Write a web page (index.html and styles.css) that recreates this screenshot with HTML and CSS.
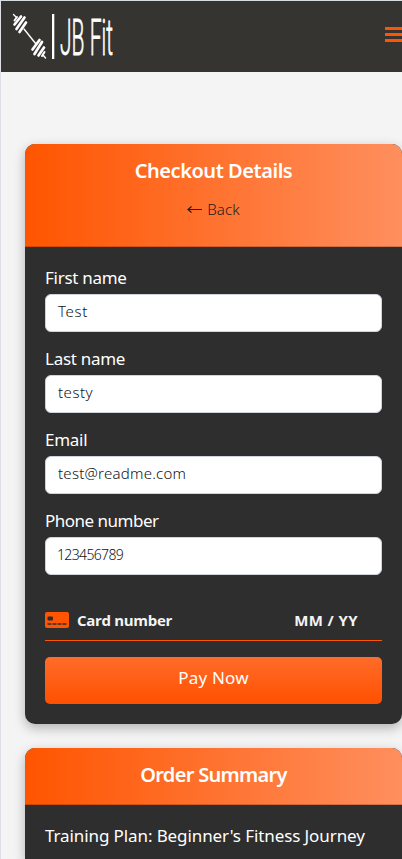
FILE: index.html
```html
<!DOCTYPE html>
<html lang="en">
<head>
<meta charset="utf-8">
<meta name="viewport" content="width=device-width">
<title>JB Fit - Checkout</title>
<link rel="stylesheet" href="styles.css">
</head>
<body>
<header class="navbar">
  <svg class="logo" width="220" height="70" viewBox="0 0 220 70" aria-label="JB Fit">
    <g stroke="#fff" stroke-linecap="round" fill="none">
      <path stroke-width="1.4" d="M13.500 14.500l3 3M24 29l12 15M43 55l2.500 3"/>
      <path stroke-width="2.700" d="M14.500 24.500l6.500-8M16.500 29l8-11.500M19.500 32l6.500-9.500M32.500 49.500l7-9.500M34.500 54l7.500-12M38.500 55.500l5.500-8"/>
      <path stroke-width="2" d="M14.500 20.500l2.500-3.500M42 56l2.500-4"/>
    </g>
    <rect x="52" y="14" width="2.300" height="45" fill="#fff"/>
    <text class="logo-text" x="60" y="54.500" textLength="53" lengthAdjust="spacingAndGlyphs">JB Fit</text>
  </svg>
  <div class="menu"><i></i><i></i><i></i></div>
</header>
<main>
  <section class="card">
    <div class="card-header checkout-header">
      <h1 class="title">Checkout Details</h1>
      <a class="back"><svg width="16" height="10" viewBox="0 0 16 10"><path d="M1 5.5h14M4.500 2.500L1 5.500l3.500 3"/></svg><span>Back</span></a>
    </div>
    <form class="fields">
      <label class="l-first"><span>First name</span></label><div class="input i-first"><span>Test</span></div>
      <label class="l-last"><span>Last name</span></label><div class="input i-last"><span>testy</span></div>
      <label class="l-email"><span>Email</span></label><div class="input i-email"><span>test@readme.com</span></div>
      <label class="l-phone"><span>Phone number</span></label><div class="input i-phone"><span>123456789</span></div>
      <div class="stripe">
        <svg width="24" height="16" viewBox="0 0 24 16"><rect width="24" height="16" rx="2" fill="#ff5500"/><rect x="2.500" y="4.500" width="5.500" height="4" rx="1" fill="#2e2e2e"/><path d="M2.500 12h19" stroke="#2e2e2e" stroke-width="1.500" stroke-dasharray="4 1"/></svg>
        <b class="number">Card number</b><b class="expiry">MM / YY</b>
      </div>
      <div class="pay"><span>Pay Now</span></div>
    </form>
  </section>
  <section class="card order">
    <div class="card-header"><h2 class="title summary">Order Summary</h2></div>
    <p class="plan"><span>Training Plan: Beginner's Fitness Journey</span></p>
  </section>
</main>
</body>
</html>
```
FILE: styles.css
```css
* { box-sizing: border-box; }
body { margin: 0; height: 859px; background: #f4f4f4; border-left: 1px solid #dfdfe7; font-family: "Noto Sans", sans-serif; color: #fff; }
.navbar { height: 72px; background: #353430; border-top: 1px solid #d5dfe2; display: flex; justify-content: space-between; align-items: flex-start; }
.logo { margin: -1px 0 0 -1px; flex: none; }
.logo-text { font: 300 50px Roboto, sans-serif; fill: #fff; stroke: #fff; stroke-width: .8px; }
.menu { width: 17px; margin-top: 26px; display: grid; gap: 3px; }
.menu i { height: 3px; background: #ff5500; }
main { padding: 72px 0 0 24px; }
.card { width: 377px; border-radius: 10px; background: #2e2e2e; box-shadow: 0 4px 12px rgba(0,0,0,.28); margin-bottom: 24px; height: 580px; overflow: hidden; }
.order { height: 111px; margin-bottom: 0; border-radius: 10px 10px 0 0; }
.card-header { height: 57px; padding-top: 14px; background: linear-gradient(90deg, #ff5500, #ff8f5e); border-bottom: 1px solid rgba(0,0,0,.18); text-align: center; }
.checkout-header { height: 103px; }
.title { margin: 0; font-size: 20px; line-height: 26px; font-weight: 600; letter-spacing: -.45px; }
.summary { letter-spacing: -.7px; }
.back { display: flex; justify-content: center; align-items: center; gap: 4px; margin-top: 13px; height: 24px; color: #202020; font-size: 15px; font-weight: 350; letter-spacing: .15px; }
.back path { fill: none; stroke: #202020; stroke-width: 1.2; }
.fields { padding: 19px 20px 0; }
label { display: block; height: 28px; line-height: 23px; font-size: 17px; letter-spacing: -.28px; }
.l-phone { letter-spacing: -.5px; }
.input { height: 38px; margin-bottom: 15px; padding-left: 12px; background: #fff; border: 1px solid #ced4da; border-radius: 6px; color: #111316; font-size: 15px; font-weight: 350; line-height: 32px; }
.i-first { letter-spacing: .7px; }
.i-last { letter-spacing: .5px; }
.i-email { letter-spacing: .25px; }
.i-phone { font-size: 14px; letter-spacing: -.65px; padding-left: 11px; line-height: 34px; }
.stripe { height: 51px; border-bottom: 1px solid #ff5500; display: flex; align-items: center; padding-top: 9px; font: 600 16px/20px "Open Sans", sans-serif; color: #f4f4f4; }
.number { margin-left: 8px; font-weight: 700; font-size: 15px; letter-spacing: -.32px; }
.expiry { margin-left: auto; margin-right: 24px; font-weight: 700; font-size: 15px; letter-spacing: .4px; }
.pay { height: 47px; margin-top: 16px; border-radius: 5px; background: linear-gradient(#ff6c2a, #ff5000); text-align: center; font-size: 17px; line-height: 42px; letter-spacing: .2px; }
.plan { margin: 0; padding: 19px 20px 0; font-size: 17px; line-height: 23px; letter-spacing: -.1px; white-space: nowrap; }
```
